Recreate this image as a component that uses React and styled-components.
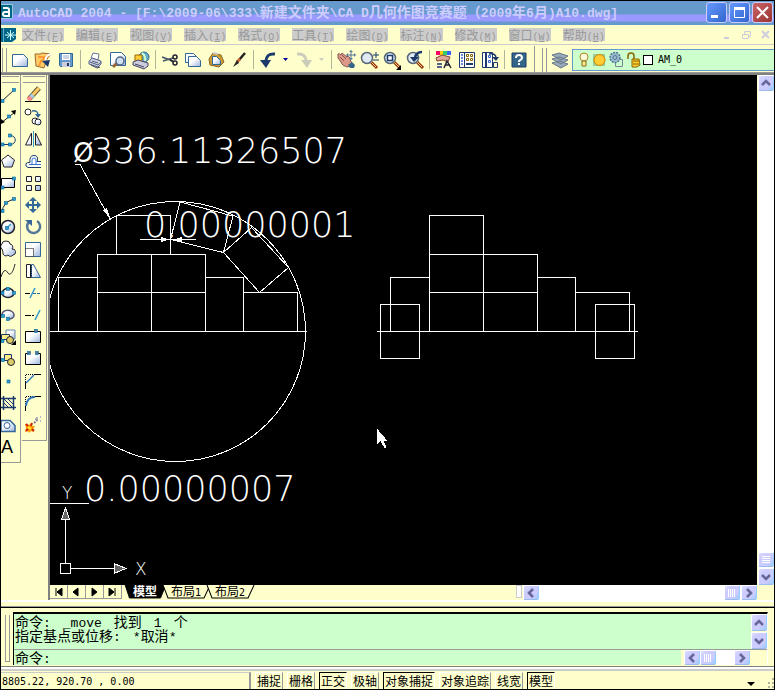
import React, { useState } from 'react';
import styled, { createGlobalStyle, css } from 'styled-components';

const cream = '#ffffcc';
const mint = '#ccffcc';
const navy = '#1b3a6b';
const sky = '#3399cc';
const ink = '#222233';

const GlobalStyle = createGlobalStyle`
  * {
    box-sizing: border-box;
  }
  body {
    margin: 0;
    background: ${cream};
    font-family: 'DejaVu Sans Mono', 'Noto Sans CJK SC', monospace;
    font-size: 10px;
    color: #000;
  }
  button {
    font: inherit;
    color: inherit;
    padding: 0;
    border: none;
    background: none;
  }
  svg {
    display: block;
  }
`;

const Window = styled.div`
  display: flex;
  flex-direction: column;
  min-height: 100vh;
  overflow: hidden;
  border: 1px solid #000;
  background: ${cream};
`;

const Han = styled.span`
  font-family: 'Noto Sans CJK SC', sans-serif;
  font-size: ${({ $size }) => $size}px;
`;

// Chinese runs are set larger than the half-width latin ones
const Mixed = ({ text, size = 12 }) =>
  text.split(/([\u3000-\u9fff\uff00-\uffef]+)/).map((part, i) =>
    i % 2 ? (
      <Han key={i} $size={size}>
        {part}
      </Han>
    ) : (
      part
    ),
  );

const TitleBar = styled.header`
  display: flex;
  align-items: flex-start;
  height: 24px;
  flex: none;
  padding-top: 1px;
  background: linear-gradient(#6699cc 13px, #9999ff 14px, #9999ff 20px, #6699cc 21px);
`;

const Title = styled.h1`
  flex: 1;
  margin: 0 0 0 5px;
  color: #ccccff;
  font-family: 'Liberation Mono', 'Noto Sans CJK SC', monospace;
  font-size: 13px;
  line-height: 19px;
  white-space: pre;
  overflow: hidden;
`;

const CaptionButtons = styled.div`
  display: flex;
  gap: 2px;
  padding-right: 1px;
`;

const CaptionButton = styled.button`
  width: 21px;
  height: 21px;
  border: 1px solid #ccccff;
  border-radius: 3px;
  background: ${({ $close }) =>
    $close
      ? 'linear-gradient(135deg, #cc6666, #993333)'
      : 'linear-gradient(135deg, #6699ff, #3366cc)'};
`;

const MenuBar = styled.nav`
  display: flex;
  align-items: center;
  height: 20px;
  flex: none;
  border-bottom: 1px solid #cccccc;
`;

const Menus = styled.div`
  display: flex;
  gap: 12px;
  margin-left: 5px;
`;

const MenuButton = styled.button`
  height: 13px;
  line-height: 13px;
  color: #999999;
  background: #cccccc;
  font-family: 'Liberation Mono', monospace;
  white-space: nowrap;
`;

const DocButtons = styled.div`
  display: flex;
  gap: 9px;
  margin-left: auto;
  padding-right: 3px;
`;

const ToolRow = styled.div`
  display: flex;
  gap: 4px;
  height: 30px;
  flex: none;
  padding-top: 1px;
  border-bottom: 2px solid #808080;
  background: linear-gradient(transparent 27px, #999999 27px);
`;

const Toolbar = styled.div`
  display: flex;
  align-items: center;
  height: 27px;
  ${({ $grow }) =>
    $grow &&
    css`
      flex: 1;
      padding-left: 6px;
      border-left: 1px solid #999999;
    `}
`;

const Grip = styled.div`
  flex: none;
  width: 5px;
  height: 24px;
  margin: 0 1px;
  border: 1px solid #999999;
  border-width: 0 1px;
`;

const Tool = styled.button`
  flex: none;
  display: grid;
  place-items: center;
  width: 23px;
  height: 22px;
`;

const Drop = styled.button`
  flex: none;
  display: grid;
  place-items: center;
  width: 13px;
  height: 22px;
`;

const Divider = styled.div`
  flex: none;
  width: 1px;
  height: 19px;
  margin-left: 3px;
  margin-right: 2px;
  background: #b3b399;
`;

const LayerBox = styled.button`
  flex: 1;
  display: flex;
  align-items: center;
  gap: 1px;
  height: 22px;
  margin-left: 1px;
  padding-left: 3px;
  border: 1px solid #6699cc;
  border-right: none;
  background: ${mint};
  text-align: left;
`;

const Swatch = styled.span`
  width: 10px;
  height: 10px;
  margin-right: 4px;
  border: 1px solid #000;
  background: #fff;
`;

const Workspace = styled.div`
  display: flex;
  flex: 1;
`;

const Palettes = styled.aside`
  flex: none;
  display: flex;
  align-items: flex-start;
  gap: 1px;
  width: 47px;
`;

const Palette = styled.div`
  display: flex;
  flex-direction: column;
  padding: 1px 0 4px;
  width: ${({ $width }) => $width}px;
  border: 1px solid #999999;
  border-width: 0 1px 1px 0;
  &::before {
    content: '';
    height: 5px;
    margin: 0 1px 1px;
    border: 1px solid #999999;
    border-width: 1px 0;
  }
`;

const PaletteTool = styled.button`
  display: flex;
  height: 22px;
  line-height: 22px;
  font-family: 'Liberation Sans', sans-serif;
  font-size: 18px;
`;

const View = styled.main`
  flex: 1;
  display: grid;
  grid-template-columns: minmax(0, 1fr) 17px;
  grid-template-rows: minmax(0, 1fr) 15px;
  border-left: 2px solid #808080;
`;

const Canvas = styled.svg`
  width: 100%;
  height: 100%;
  min-height: 500px;
  background: #000;
`;

const DimText = styled.text`
  font-family: 'DejaVu Sans', sans-serif;
  font-weight: ${({ $weight = 200 }) => $weight};
  font-size: ${({ $size }) => $size}px;
  fill: #ffffff;
`;

const ScrollBar = styled.div`
  display: flex;
  flex: ${({ $grow }) => ($grow ? 1 : 'initial')};
  flex-direction: ${({ $vertical }) => ($vertical ? 'column' : 'row')};
  justify-content: space-between;
  min-width: 0;
  background: #fff;
  ${({ $vertical }) =>
    $vertical &&
    css`
      border-left: 1px solid ${cream};
    `}
`;

const ScrollEnd = styled.div`
  display: flex;
  flex-direction: ${({ $vertical }) => ($vertical ? 'column' : 'row')};
  gap: 1px;
`;

const ScrollButton = styled.button`
  display: grid;
  place-items: center;
  width: 16px;
  height: ${({ $h = 15 }) => $h}px;
  border: 1px solid #fff;
  border-right-color: #99ccff;
  border-bottom-color: #99bbee;
  border-radius: 2px;
  background: linear-gradient(135deg, #ddddff, #ccccff 30%, #ccccff 70%, #99ccff);
`;

const SheetRow = styled.div`
  display: flex;
  min-width: 0;
`;

const SheetNav = styled.button`
  display: grid;
  place-items: center;
  width: 18px;
  height: 14px;
  border-right: 1px solid #999999;
  border-bottom: 1px solid #999999;
`;

const Sheets = styled.div`
  display: flex;
  flex: 1;
  padding-left: 4px;
`;

const SheetTab = styled.button`
  position: relative;
  padding: 0 7px;
  height: 14px;
  line-height: 12px;
  color: ${({ $active }) => ($active ? '#fff' : '#000')};
  font-weight: ${({ $active }) => ($active ? 700 : 400)};
  white-space: nowrap;
`;

const SheetShape = styled.svg`
  position: absolute;
  inset: 0;
  width: 100%;
  height: 100%;
  overflow: visible;
`;

const SheetLabel = styled.span`
  position: relative;
`;

const SheetScroll = styled.div`
  display: flex;
  width: 241px;
`;

const SplitHandle = styled.div`
  width: 6px;
  height: 13px;
  margin-right: 1px;
  border: 1px solid #cccccc;
  background: #fff;
`;

const Corner = styled.div`
  background: ${cream};
`;

const Splitter = styled.div`
  flex: none;
  height: 8px;
  border-top: 2px solid #fff;
  border-bottom: 1px solid #000;
  background: linear-gradient(${cream} 4px, #999999 4px);
`;

const CommandPanel = styled.section`
  flex: none;
  display: flex;
  padding: 4px 6px 1px 0;
`;

const CommandGrip = styled.div`
  width: 5px;
  margin: 3px 3px 3px 4px;
  border: 1px solid #999999;
  border-width: 0 1px 1px;
`;

const CommandBody = styled.div`
  flex: 1;
  border: 1px solid #000;
  border-width: 2px 0 0 1px;
  border-right: 1px solid #fff;
`;

const CommandRow = styled.div`
  display: flex;
  justify-content: space-between;
  & + & {
    border-top: 1px solid #999999;
  }
`;

const Log = styled.div`
  flex: 1;
  padding-left: 1px;
  height: 35px;
  background: ${mint};
`;

const LogLine = styled.div`
  display: flex;
  align-items: baseline;
  gap: 12px;
  height: 14px;
  line-height: 14px;
  font-family: 'Liberation Mono', monospace;
  font-size: 13px;
  white-space: nowrap;
`;

const Prompt = styled.label`
  flex: 1;
  display: flex;
  align-items: baseline;
  height: 15px;
  padding-left: 1px;
  background: ${mint};
  font-family: 'Liberation Mono', monospace;
  font-size: 13px;
  line-height: 15px;
  white-space: nowrap;
`;

const PromptInput = styled.input`
  flex: 1;
  min-width: 0;
  height: 15px;
  padding: 0 8px;
  border: none;
  outline: none;
  background: transparent;
  font: inherit;
`;

const PromptScroll = styled.div`
  display: flex;
  width: 86px;
  padding: 0 17px 0 3px;
`;

const StatusBar = styled.footer`
  flex: none;
  display: flex;
  align-items: stretch;
  gap: 4px;
  height: 23px;
  border-top: 1px solid #808080;
  background: linear-gradient(#fff 2px, #cccccc 2px, #cccccc 4px, ${cream} 4px);
  padding-top: 5px;
`;

const Coordinates = styled.output`
  width: 250px;
  padding-left: 1px;
  line-height: 18px;
  border: 1px solid #cccccc;
  border-width: 1px 2px 0 0;
  border-right-color: #999999;
  white-space: pre;
`;

const Mode = styled.button`
  padding: 0 1px;
  line-height: 16px;
  border: 1px solid #fff;
  border-right-color: #999999;
  border-bottom: none;
  white-space: nowrap;
  ${({ $on }) =>
    $on &&
    css`
      border-color: #000 #fff #fff #000;
    `}
`;

const StatusTail = styled.div`
  display: flex;
  align-items: flex-end;
  gap: 11px;
  margin-left: auto;
`;

const Icon = ({ w = 22, h = 22, children }) => (
  <svg width={w} height={h} viewBox={`0 0 ${w} ${h}`} fill="none" aria-hidden="true">
    {children}
  </svg>
);

const Node = ({ x, y, fill = sky }) => (
  <rect x={x - 1.5} y={y - 1.5} width="3" height="3" fill={fill} stroke="#006699" strokeWidth=".6" />
);

const Glass = () => (
  <>
    <path d="m13 13 6 6" stroke="#993300" strokeWidth="3" />
    <path d="m13 13 5 5" stroke="#ffcc99" strokeWidth="1" />
    <circle cx="9" cy="9" r="5.5" fill="#dfeaf2" stroke="#556677" strokeWidth="1.5" />
  </>
);

const Page = ({ x = 0, y = 0, w = 15, h = 12 }) => (
  <path
    d={`M${x} ${y}h${w - 4}l4 4v${h - 4}h-${w}z`}
    fill="url(#sheen)"
    stroke="#336699"
  />
);

const icons = {
  new: <Page x={3.5} y={5.5} />,
  open: (
    <>
      <path d="M3 5h5l2-1 9 1-4 5-3 9-8-2z" fill="#ffcc66" stroke="#996633" />
      <path d="m6 8 8 0-5 4-2 5" stroke="#ff9933" strokeWidth="2" />
      <path d="M19 5q-7 2-5 8" stroke="#ffffff" strokeWidth="2" />
      <path d="m10 12 8-1-2 7z" fill={navy} />
    </>
  ),
  save: (
    <>
      <path d="M4.500 4.500h13v13h-12l-1-1z" fill="#6699cc" stroke="#336699" />
      <path d="M7 5h8v6H7z" fill="#fff" />
      <path d="M8 7h6M8 9h6" stroke="#99aacc" />
      <path d="M7 13h8v5H7z" fill="#ccccdd" />
      <path d="M12 14h2v3h-2z" fill={navy} />
    </>
  ),
  print: (
    <>
      <path d="m7 9 2-5 6 1-1 6z" fill="#fff" stroke="#667799" />
      <path d="m5 12 3-3 9 3v3l-3 3-9-3z" fill="#ccccdd" stroke="#556688" />
      <path d="m6 13 8 3 3-3M8 12l6 2" stroke="#556688" />
      <path d="m7 16 6 3 3-1" stroke="#334466" />
    </>
  ),
  preview: (
    <>
      <Page x={3.5} y={3.5} w={15} h={13} />
      <path d="m10 14-4 4" stroke="#996633" strokeWidth="3" />
      <circle cx="13" cy="12" r="4" fill="#cfe0f0" stroke="#556688" strokeWidth="1.500" />
    </>
  ),
  publish: (
    <>
      <circle cx="14" cy="8" r="5" fill="#66aacc" stroke="#336688" />
      <path d="M12 4q4 3 3 8" stroke="#ccffcc" strokeWidth="2" />
      <path d="M5 6h7v7H5z" fill="#ffcc33" stroke="#996600" />
      <path d="m3 13 5-2 10 3v3l-4 3-11-4z" fill="#ccccdd" stroke="#444466" />
      <path d="m5 15 9 3" stroke="#444466" />
    </>
  ),
  cut: (
    <>
      <path d="m3 8 11 4M4 12l10-3" stroke="#445566" strokeWidth="1.500" />
      <circle cx="16" cy="8" r="2" stroke={ink} strokeWidth="1.500" />
      <circle cx="16" cy="14" r="2" stroke={ink} strokeWidth="1.500" />
      <path d="m11 11 4 2" stroke={ink} strokeWidth="1.500" />
    </>
  ),
  copy: (
    <>
      <Page x={3.5} y={4.5} w={12} h={9} />
      <Page x={6.5} y={7.5} w={12} h={10} />
    </>
  ),
  paste: (
    <>
      <path d="m4 10 4-6 8 2 3 7-5 5-9-2z" fill="#cc9933" stroke="#886622" />
      <Page x={7.5} y={7.5} w={8} h={8} />
      <path d="m8 4 5 1" stroke="#ccc" strokeWidth="2" />
    </>
  ),
  match: (
    <>
      <path d="m17 4-6 7" stroke="#222" strokeWidth="2.500" />
      <path d="m12 10-3 3" stroke="#cc6633" strokeWidth="3" />
      <path d="m9 11 2 3-6 4z" fill="#222" />
    </>
  ),
  undo: (
    <>
      <path d="M18 5q-9-1-9 8" stroke={navy} strokeWidth="3" />
      <path d="M3 11h11l-5 8z" fill={navy} />
    </>
  ),
  redo: (
    <>
      <path d="M4 5q9-1 9 8" stroke="#ccccbb" strokeWidth="3" />
      <path d="M8 11h11l-5 8z" fill="#ccccbb" />
    </>
  ),
  pan: (
    <>
      <path
        d="M3 5q1-1 3 1l1-2 5 4 1-1q2 1 2 3l2 5-4 3q-6-1-7-5l-3-4z"
        fill="#dd9988"
        stroke="#885555"
      />
      <path d="m5 8 4 4M7 6l4 4" stroke="#885555" />
      <path d="m13 16 4-3 3 3-1 3h-4z" fill="#336688" />
      <path d="M16 2v8M12 6h8" stroke="#557799" />
      <path d="m16 1 2 2h-4zM16 11l2-2h-4zM11 6l2-2v4zM21 6l-2-2v4z" fill="#557799" />
    </>
  ),
  zoom: (
    <>
      <Glass />
      <path d="M18 3v6M15 6h6M15 11h6" stroke={navy} />
    </>
  ),
  zoomWindow: (
    <>
      <Glass />
      <path d="M6.500 6.500h5v5h-5z" fill="#fff" stroke={navy} strokeWidth="1.500" />
      <path d="M20 16v5h-5z" fill="#000" />
    </>
  ),
  zoomPrevious: (
    <>
      <Glass />
      <path d="M18 3q-6 0-7 6" stroke={navy} strokeWidth="2.500" />
      <path d="M6 8h9l-5 5z" fill={navy} />
    </>
  ),
  properties: (
    <>
      <path d="M3 2h4v4H3z" fill="#ff0066" />
      <path d="M7 2h3v4H7z" fill="#ffcc00" />
      <path d="M10 2h4v4h-4z" fill="#33cc66" />
      <path d="M14 2h4v4h-4z" fill="#3366ff" />
      <path d="m3 9 6-3 8 2-2 5-5-2-6 1z" fill="#ddaa99" stroke="#884433" />
      <path d="M4 15h5M4 18h5" stroke="#556688" strokeWidth="2" />
      <path d="m11 19 3-7 4 7M12 16h5" stroke={ink} strokeWidth="1.500" />
    </>
  ),
  designCenter: (
    <>
      <path d="M3.500 3.500h15v15h-15z" fill="#fff" stroke={navy} />
      <path d="M8.500 3v16" stroke={navy} />
      <path d="M5 6h2M5 9h2M5 12h2M5 15h2" stroke="#3366cc" strokeWidth="1.500" />
      <path
        d="M10.500 5.500h2v2h-2zM14.500 5.500h2v2h-2zM10.500 9.500h2v2h-2zM14.500 9.500h2v2h-2z"
        stroke="#886600"
      />
      <path d="M10 15h7" stroke={navy} strokeWidth="2" />
    </>
  ),
  toolPalettes: (
    <>
      <path d="M3.500 3.500h10v15h-10z" fill="#fff" stroke={navy} />
      <path d="M7 4v14" stroke={navy} strokeWidth="2" />
      <path d="M9.500 6.500h2v2h-2zM9.500 11.500h2v2h-2z" stroke="#3366cc" />
      <path d="M10 5q7-1 7 4" stroke={navy} strokeWidth="1.500" />
      <path d="M13 8h7l-3 4z" fill={navy} />
      <path d="M14.500 13.500h4v5h-4z" fill="#ffffcc" stroke={navy} />
    </>
  ),
};

const drawIcons = [
  <>
    <path d="M1 17 13 6" stroke={ink} />
    <Node x={1.5} y={17} />
    <Node x={13} y={6} />
  </>,
  <>
    <path d="M0 17 14 6" stroke={ink} />
    <path d="m15 4-1 5-4-4zM0 18v-5l4 3z" fill="#000" />
    <Node x={8} y={10.5} />
  </>,
  <>
    <path d="M0 16.500h9c7 0 7-9 0-9" stroke={navy} />
    <Node x={1.5} y={16.5} />
    <Node x={9} y={16.5} />
    <Node x={9} y={7.5} />
  </>,
  <path d="m7 5 6.500 5-2.500 7H3L.500 10z" fill="url(#sheen)" stroke={ink} />,
  <>
    <path d="M.500 6.500h13v9H.500z" fill="url(#sheen)" stroke="#000" />
    <Node x={1.5} y={15.5} />
    <Node x={13} y={6.5} />
  </>,
  <>
    <path d="M1 18Q2 8 13 5" stroke={ink} />
    <Node x={1.5} y={17} />
    <Node x={5} y={9} />
    <Node x={13} y={5} />
  </>,
  <>
    <circle cx="7" cy="11" r="6.500" fill="url(#sheen)" stroke={ink} strokeWidth="1.500" />
    <path d="m6 12 4-4" stroke={sky} strokeWidth="1.500" />
    <Node x={6} y={12} />
  </>,
  <path
    d="M1 11a3 3 0 0 1 0-5 4 3 0 0 1 8 0 3 3 0 0 1 2 5 3 3 0 0 1 1 6 3 3 0 0 1-5 0 3 3 0 0 1-5-3z"
    fill="url(#sheen)"
    stroke={ink}
  />,
  <path d="M0 17c3-9 5-7 7-4s5 0 7-9" stroke={ink} />,
  <>
    <ellipse cx="7" cy="11" rx="6" ry="4.500" fill="url(#sheen)" stroke={ink} strokeWidth="1.500" />
    <Node x={1.5} y={11} />
    <Node x={7} y={7} />
    <Node x={13} y={11} />
  </>,
  <>
    <path d="M1 12c-1-8 12-7 12-1 0 4-4 4-6 4" fill="url(#sheen)" stroke="#555577" strokeWidth="1.500" />
    <Node x={7} y={15} />
    <Node x={2} y={12} />
  </>,
  <>
    <path d="M5 4h9v9H5z" fill="url(#sheen)" stroke="#6688aa" />
    <path d="M.500 8.500h8v5h-8z" fill="#ffee88" stroke={navy} />
    <circle cx="9" cy="14" r="3.500" fill="#ddcc66" stroke={ink} />
    <path d="M15 14v5h-5z" fill="#000" />
    <Node x={1.5} y={15} />
  </>,
  <>
    <path d="M3.500 6.500h7v6h-7z" fill="#ffee88" stroke={navy} />
    <circle cx="10" cy="14" r="3.500" fill="#ddcc66" stroke={ink} />
    <Node x={2} y={12} />
  </>,
  <Node x={7.5} y={11.5} />,
  <>
    <path d="M0 6.500h15M0 15.500h15M2.500 4v14M12.500 4v14" stroke={navy} strokeWidth="1.500" />
    <path d="m3 11 4 4M3 7l8 8M7 7l5 5" stroke={navy} />
  </>,
  <>
    <path d="M0 6.500h9l5 5v6H0z" fill="url(#sheen)" stroke="#336699" strokeWidth="1.500" />
    <circle cx="6" cy="11.500" r="3" fill="#fff" stroke="#336699" />
  </>,
];

const modifyIcons = [
  <>
    <path d="M3 17.500h16" stroke="#000" />
    <path d="m7 15 10-11" stroke="#665533" strokeWidth="5" />
    <path d="m8 14 9-10" stroke="#ffcc66" strokeWidth="3" />
    <path d="m6 16 3-3" stroke="#ff8888" strokeWidth="4" />
    <path d="m9 13 2-2" stroke="#99ccee" strokeWidth="4" />
  </>,
  <>
    <circle cx="6" cy="6" r="3" fill="#fff" stroke={ink} />
    <circle cx="13" cy="15" r="3" fill="#fff" stroke={ink} />
    <circle cx="16" cy="16" r="3" fill="url(#sheen)" stroke={ink} />
    <path d="M10 5q6-1 6 4" stroke="#336699" strokeWidth="1.500" />
    <path d="M13 8h6l-3 4z" fill="#336699" />
  </>,
  <>
    <path d="M9.500 5v12h-6zM13.500 5v12h6z" fill="url(#sheen)" stroke={ink} />
    <path d="M11.500 3v16" stroke={sky} />
  </>,
  <>
    <path
      d="M19 17.500H6q-3-1-2-4 1-1 4-1-1-7 4-7t3 6h4"
      fill="#fff"
      stroke={navy}
    />
    <path d="M19 14.500H7m3 0V10q0-2 2-2t2 2v4" stroke="#3377cc" />
  </>,
  <path
    d="M4.500 4.500h5v5h-5zM13.500 4.500h5v5h-5zM4.500 13.500h5v5h-5zM13.500 13.500h5v5h-5z"
    fill="url(#sheen)"
    stroke={ink}
  />,
  <>
    <path d="M11 5v12M5 11h12" stroke="#336699" strokeWidth="2" />
    <path d="m11 3 4 4H7zM11 19l4-4H7zM3 11l4-4v8zM19 11l-4-4v8z" fill="#336699" />
  </>,
  <>
    <path d="M7 6a6.500 6.500 0 1 0 8-1" stroke="#557799" strokeWidth="2.500" />
    <path d="M3 4h7v6z" fill="#336699" />
  </>,
  <>
    <path d="M3.500 4.500h15v14h-15z" fill="url(#sheen)" stroke="#336699" />
    <path d="M3.500 10.500h8v8h-8z" fill="#fff" stroke="#000" strokeDasharray="1 1" />
  </>,
  <>
    <path d="M9.500 4.500h2l7 13h-9z" fill="url(#sheen)" stroke="#336699" />
    <path d="M4.500 4.500h4v13h-4z" fill="#fff" stroke={ink} />
    <path d="M9 5v13" stroke="#000" strokeDasharray="1 1" />
  </>,
  <>
    <path d="M3 11.500h5" stroke="#000" />
    <path d="M11 11.500h8" stroke="#336699" strokeDasharray="3 1" />
    <path d="m8 16 5-10" stroke={sky} strokeWidth="1.500" />
  </>,
  <>
    <path d="M3 11.500h4" stroke="#000" />
    <path d="M7 11.500h6" stroke="#000" strokeDasharray="2 1" />
    <path d="m13 16 5-10" stroke={sky} strokeWidth="1.500" />
  </>,
  <>
    <path d="M3.500 5.500h15v11h-15z" fill="url(#sheen)" stroke="#000" />
    <Node x={14} y={5} fill="#557799" />
  </>,
  <>
    <path d="M3.500 5.500h15v11h-15z" fill="url(#sheen)" />
    <path d="M6 5.500H3.500v11h15v-11H16" stroke="#000" />
    <Node x={7} y={5} fill="#557799" />
    <Node x={15} y={5} fill="#557799" />
  </>,
  <>
    <path d="M3.500 12V4.500H12" stroke="#000" strokeDasharray="1 1" />
    <path d="M3.500 12v7M12 4.500h7" stroke="#000" />
    <path d="m4 13 8-8" stroke="#3377bb" strokeWidth="1.500" />
  </>,
  <>
    <path d="M3.500 12V4.500H12" stroke="#000" strokeDasharray="1 1" />
    <path d="M3.500 13v6M12 4.500h7" stroke="#000" />
    <path d="M4 14q1-9 9-9" stroke="#3377bb" strokeWidth="2" />
  </>,
  <>
    <path d="m3 18 1-4-1-4 4 1 2-2 1 3 3 0-2 3 1 3-3-1-2 2-1-2z" fill="#ff9900" />
    <path d="m4 10 2 2M10 9l-1 3M4 17l2-2M12 17l-2-2" stroke="#cc2200" strokeWidth="2" />
    <path d="m6 13 3 2" stroke="#ffee33" strokeWidth="2" />
    <path d="m12 9 4-4" stroke="#887799" strokeWidth="2" strokeDasharray="2 1" />
    <path d="M15 3v2M18 7h1M13 5h1M18 3h1" stroke="#6666cc" />
  </>,
];

const menus = [
  ['文件', 'F'],
  ['编辑', 'E'],
  ['视图', 'V'],
  ['插入', 'I'],
  ['格式', 'O'],
  ['工具', 'T'],
  ['绘图', 'D'],
  ['标注', 'N'],
  ['修改', 'M'],
  ['窗口', 'W'],
  ['帮助', 'H'],
];

const toolGroups = [
  ['new', 'open', 'save'],
  ['print', 'preview', 'publish'],
  ['cut', 'copy', 'paste', 'match'],
  ['undo', 'redo'],
  ['pan', 'zoom', 'zoomWindow', 'zoomPrevious'],
  ['properties', 'designCenter', 'toolPalettes'],
];

const arrows = {
  up: 'm2 8 4-4 4 4',
  down: 'm2 4 4 4 4-4',
  left: 'M8 2 4 6l4 4',
  right: 'm4 2 4 4-4 4',
};

const Arrow = ({ dir, h }) => (
  <ScrollButton aria-label={dir} $h={h}>
    <Icon w={12} h={12}>
      <path d={arrows[dir]} stroke="#666699" strokeWidth="2.500" />
    </Icon>
  </ScrollButton>
);

const Thumb = ({ vertical }) => (
  <ScrollButton aria-label="thumb">
    <Icon w={10} h={10}>
      <path
        d={vertical ? 'M1 1.500h8M1 3.500h8M1 5.500h8M1 7.500h8' : 'M1.500 1v8M3.500 1v8M5.500 1v8M7.500 1v8'}
        stroke="#fff"
      />
    </Icon>
  </ScrollButton>
);

const Drawing = () => (
  <Canvas aria-label="A10.dwg">
    <g transform="translate(-50 -75)" stroke="#fff" fill="none" shapeRendering="crispEdges">
      <circle cx="175.5" cy="331.5" r="130" />
      <path d="M50 331.500h257M116.500 254.500v-39h54v39M97.500 331.500v-77h108v77M151.500 254.500v77M97.500 292.500h108M58.500 331.500v-54h39M205.500 277.500h38v54M243.500 292.500h54v39" />
      <path d="M180 202 233 216 223.500 252.500 170.500 239.500zM251.500 227.500 288.500 267.500 259.500 292.500 223.500 252.500z" />
      <path d="M75 164.500h5L110 219M140 239.500h56" />
      <path d="m111 220-8-10 4-2zM161 237l9 2.500-9 2.500zM182 237l-9 2.500 9 2.500z" fill="#fff" stroke="none" />

      <path d="M377 331.500h261M429.500 331.500v-116h54v116M429.500 254.500h108v77M429.500 292.500h108M390.500 331.500v-54h39M537.500 277.500h38v54M575.500 292.500h54v39" />
      <path d="M380.500 304.500h39v54h-39zM595.500 304.500h39v54h-39z" />

      <path d="M50 503.500h39M65.500 519v44M60.500 563.500h10v10h-10zM71 568.500h43" />
      <path d="m65.500 508-4 11h8zM126 568.500l-12-5v10z" fill="#666" />
      <path d="M376.500 428v17l4-4 4 7 2-1-3-6h4z" fill="#fff" stroke="none" />
    </g>
    <g transform="translate(-50 -75)">
      <DimText x="73" y="162" $size={26} $weight={400}>
        Ø
      </DimText>
      <DimText x="91" y="163" $size={35}>
        336.11326507
      </DimText>
      <DimText x="144" y="237" $size={35}>
        0.00000001
      </DimText>
      <DimText x="84" y="501" $size={35}>
        0.00000007
      </DimText>
      <DimText x="62" y="499" $size={17}>
        Y
      </DimText>
      <DimText x="135" y="575" $size={17}>
        X
      </DimText>
    </g>
  </Canvas>
);

const navIcons = ['M4 1v8M10 1 5 5l5 4z', 'M8 1 3 5l5 4z', 'm4 1 5 4-5 4z', 'M9 1v8M3 1l5 4-5 4z'];

const App = () => {
  const [sheet, setSheet] = useState('模型');
  const [modes, setModes] = useState({ 正交: true, 对象捕捉: true, 模型: true });
  const toggleMode = (name) => setModes({ ...modes, [name]: !modes[name] });

  return (
    <Window>
      <GlobalStyle />

      <TitleBar>
        <Icon w={12} h={18}>
          <defs>
            <linearGradient id="sheen" x1="0" y1="0" x2="1" y2="1">
              <stop offset=".4" stopColor="#ffffff" />
              <stop offset="1" stopColor="#99b3dd" />
            </linearGradient>
          </defs>
          <path d="M0 2.500h11.500v14H0" fill="#006688" stroke="#99ccdd" />
          <path d="M2 6h4q2 0 2 2v6H4q-2 0-2-2t2-2h4" stroke="#fff" strokeWidth="2" />
        </Icon>
        <Title>
          <Mixed
            text="AutoCAD 2004 - [F:\2009-06\333\新建文件夹\CA D几何作图竞赛题（2009年6月)A10.dwg]"
            size={14}
          />
        </Title>
        <CaptionButtons>
          <CaptionButton aria-label="minimize">
            <Icon w={19} h={19}>
              <path d="M4 13.500h7" stroke="#fff" strokeWidth="3" />
            </Icon>
          </CaptionButton>
          <CaptionButton aria-label="maximize">
            <Icon w={19} h={19}>
              <path d="M4.500 5.500h10v9h-10z" stroke="#fff" />
              <path d="M4 5.500h11" stroke="#fff" strokeWidth="3" />
            </Icon>
          </CaptionButton>
          <CaptionButton aria-label="close" $close>
            <Icon w={19} h={19}>
              <path d="m4 4 11 11m0-11-11 11" stroke="#fff" strokeWidth="2" />
            </Icon>
          </CaptionButton>
        </CaptionButtons>
      </TitleBar>

      <MenuBar>
        <Icon w={16} h={16}>
          <path d="M0 1h15v11l-4 3H0z" fill="#006688" />
          <path d="M2.500 1v14" stroke="#66aacc" />
          <path d="M9.500 3v10M4 8h11M6 5l7 6M13 5l-7 6" stroke="#ccffff" />
        </Icon>
        <Menus>
          {menus.map(([name, key]) => (
            <MenuButton key={key}>
              <Mixed text={name} />(<u>{key}</u>)
            </MenuButton>
          ))}
        </Menus>
        <DocButtons>
          <button aria-label="minimize drawing">
            <Icon w={10} h={10}>
              <path d="M1 8h5" stroke="#ccccdd" strokeWidth="2" />
            </Icon>
          </button>
          <button aria-label="restore drawing">
            <Icon w={10} h={10}>
              <path d="M.500 4.500h6v4h-6zM2.500 4V1.500h6v5H7" stroke="#ccccdd" />
            </Icon>
          </button>
          <button aria-label="close drawing">
            <Icon w={10} h={10}>
              <path d="m1 1 7 7m0-7-7 7" stroke="#ccccdd" strokeWidth="2" />
            </Icon>
          </button>
        </DocButtons>
      </MenuBar>

      <ToolRow>
        <Toolbar>
          <Grip />
          {toolGroups.map((group) => (
            <React.Fragment key={group[0]}>
              {group.map((name) => (
                <React.Fragment key={name}>
                  <Tool aria-label={name}>
                    <Icon>{icons[name]}</Icon>
                  </Tool>
                  {group.length === 2 && (
                    <Drop aria-label={`${name} list`}>
                      <Icon w={7} h={4}>
                        <path d="M1 0h5L3.500 3z" fill={name === 'undo' ? '#000099' : '#ccccbb'} />
                      </Icon>
                    </Drop>
                  )}
                </React.Fragment>
              ))}
              <Divider />
            </React.Fragment>
          ))}
          <Tool aria-label="help">
            <Icon>
              <path d="M4 4h14v14H4z" fill="#336688" stroke={navy} />
              <path d="M8 9q0-3 3-3t3 3q0 1-3 3v1M11 14v2" stroke="#fff" strokeWidth="2" />
            </Icon>
          </Tool>
        </Toolbar>
        <Toolbar $grow>
          <Grip />
          <Tool aria-label="layers">
            <Icon>
              <path
                d="m3 14 7-2 9 3-7 4zM3 10l7-2 9 3-7 4zM3 6l7-2 9 3-7 4z"
                fill="#99aabb"
                stroke="#667788"
              />
            </Icon>
          </Tool>
          <LayerBox aria-label="layer">
            <Icon w={15} h={18}>
              <circle cx="8" cy="6" r="4" fill="#ffffdd" stroke="#aa8822" />
              <path d="M6 10h4v5H6z" fill="#ffee88" stroke="#886622" />
            </Icon>
            <Icon w={15} h={18}>
              <path d="M1 3h12v12H1z" fill="#99cc99" />
              <circle cx="7.5" cy="9" r="5.5" fill="#ffcc33" stroke="#cc8800" />
            </Icon>
            <Icon w={17} h={18}>
              <path d="M7.500 8.500h7v7h-7z" stroke="#778899" />
              <circle
                cx="7"
                cy="6.5"
                r="5"
                fill="#99bbcc"
                stroke="#557799"
                strokeDasharray="2 1"
                strokeWidth="1.5"
              />
              <circle cx="7" cy="6.5" r="2" stroke="#557799" />
            </Icon>
            <Icon w={16} h={18}>
              <path d="M2 8V5q0-3 3-3t3 3v3" stroke="#886600" strokeWidth="1.500" />
              <path d="M6 8h7l1 6-3 2H6z" fill="#ffcc33" stroke="#886600" />
              <path d="M7 10h6M7 13h6" stroke="#886600" />
            </Icon>
            <Swatch />
            AM_0
          </LayerBox>
        </Toolbar>
      </ToolRow>

      <Workspace>
        <Palettes>
          <Palette $width={20}>
            {drawIcons.map((icon, i) => (
              <PaletteTool key={i} aria-label={`draw ${i + 1}`}>
                <Icon w={18}>{icon}</Icon>
              </PaletteTool>
            ))}
            <PaletteTool aria-label="text">A</PaletteTool>
          </Palette>
          <Palette $width={25}>
            {modifyIcons.map((icon, i) => (
              <PaletteTool key={i} aria-label={`modify ${i + 1}`}>
                <Icon>{icon}</Icon>
              </PaletteTool>
            ))}
          </Palette>
        </Palettes>

        <View>
          <Drawing />
          <ScrollBar $vertical>
            <Arrow dir="up" h={16} />
            <ScrollEnd $vertical>
              <Thumb vertical />
              <Arrow dir="down" h={17} />
            </ScrollEnd>
          </ScrollBar>
          <SheetRow>
            {navIcons.map((d) => (
              <SheetNav key={d} aria-label="sheet">
                <Icon w={13} h={10}>
                  <path d={d} fill="#000" stroke="#000" />
                </Icon>
              </SheetNav>
            ))}
            <Sheets>
              {['模型', '布局1', '布局2'].map((name) => (
                <SheetTab key={name} $active={sheet === name} onClick={() => setSheet(name)}>
                  <SheetShape viewBox="0 0 44 14" preserveAspectRatio="none">
                    <path
                      d="m-1 0 5 13h36l6-13"
                      fill={sheet === name ? '#000' : cream}
                      stroke="#000"
                    />
                  </SheetShape>
                  <SheetLabel>
                    <Mixed text={name} />
                  </SheetLabel>
                </SheetTab>
              ))}
            </Sheets>
            <SheetScroll>
              <SplitHandle />
              <ScrollBar $grow>
                <Arrow dir="left" />
                <ScrollEnd>
                  <Thumb />
                  <Arrow dir="right" />
                </ScrollEnd>
              </ScrollBar>
            </SheetScroll>
          </SheetRow>
          <Corner />
        </View>
      </Workspace>
      <Splitter />

      <CommandPanel>
        <CommandGrip />
        <CommandBody>
          <CommandRow>
            <Log>
              <LogLine>
                {['命令:', '_move', '找到', '1', '个'].map((word) => (
                  <span key={word}>
                    <Mixed text={word} size={14} />
                  </span>
                ))}
              </LogLine>
              <LogLine>
                {['指定基点或位移:', '*取消*'].map((word) => (
                  <span key={word}>
                    <Mixed text={word} size={14} />
                  </span>
                ))}
              </LogLine>
            </Log>
            <ScrollEnd $vertical>
              <Arrow dir="up" h={17} />
              <Arrow dir="down" h={17} />
            </ScrollEnd>
          </CommandRow>
          <CommandRow>
            <Prompt>
              <Mixed text="命令:" size={14} />
              <PromptInput />
            </Prompt>
            <PromptScroll>
              <Arrow dir="left" />
              <Thumb />
              <ScrollBar $grow />
              <Arrow dir="right" />
            </PromptScroll>
          </CommandRow>
        </CommandBody>
      </CommandPanel>

      <StatusBar>
        <Coordinates>8805.22, 920.70 , 0.00</Coordinates>
        {['捕捉', '栅格', '正交', '极轴', '对象捕捉', '对象追踪', '线宽', '模型'].map((name) => (
          <Mode key={name} $on={modes[name]} onClick={() => toggleMode(name)}>
            <Mixed text={name} />
          </Mode>
        ))}
        <StatusTail>
          <Icon w={8} h={8}>
            <path d="M0 1h8L4 5z" fill="#000" />
          </Icon>
          <Icon w={8} h={12}>
            <path d="M6 1h2v2H6zM6 5h2v2H6zM2 5h2v2H2zM6 9h2v2H6zM2 9h2v2H2z" fill="#b3b399" />
          </Icon>
        </StatusTail>
      </StatusBar>
    </Window>
  );
};

export default App;
